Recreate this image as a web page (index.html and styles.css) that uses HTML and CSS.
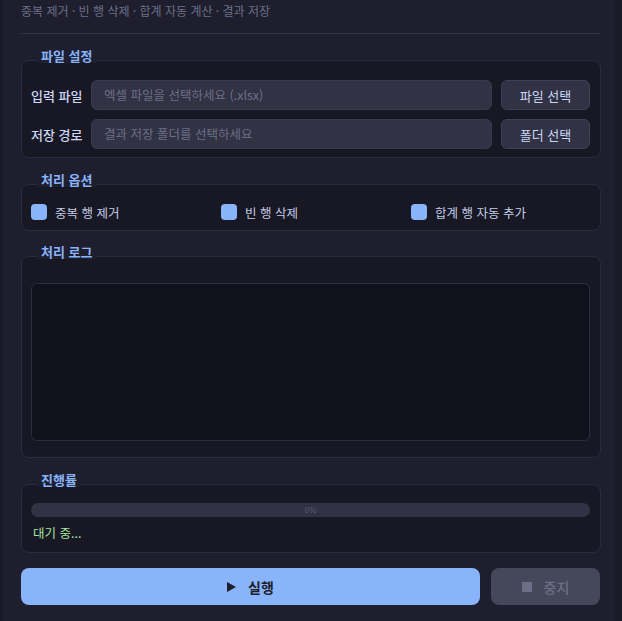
FILE: index.html
```html
<!DOCTYPE html>
<html lang="ko">
<head>
<meta charset="utf-8">
<title>엑셀 처리</title>
<link rel="stylesheet" href="styles.css">
</head>
<body>
<div class="app">
  <div class="subtitle">중복 제거 · 빈 행 삭제 · 합계 자동 계산 · 결과 저장</div>
  <div class="divider"></div>

  <section class="group group-files">
    <div class="group-title">파일 설정</div>
    <div class="file-row">
      <span class="row-label">입력 파일</span>
      <div class="input">엑셀 파일을 선택하세요 (.xlsx)</div>
      <button class="btn">파일 선택</button>
    </div>
    <div class="file-row">
      <span class="row-label">저장 경로</span>
      <div class="input">결과 저장 폴더를 선택하세요</div>
      <button class="btn">폴더 선택</button>
    </div>
  </section>

  <section class="group group-options">
    <div class="group-title">처리 옵션</div>
    <div class="options">
      <label class="check"><span class="box"></span><span>중복 행 제거</span></label>
      <label class="check"><span class="box"></span><span>빈 행 삭제</span></label>
      <label class="check"><span class="box"></span><span>합계 행 자동 추가</span></label>
    </div>
  </section>

  <section class="group group-log">
    <div class="group-title">처리 로그</div>
    <div class="log"></div>
  </section>

  <section class="group group-progress">
    <div class="group-title">진행률</div>
    <div class="progress"><span>0%</span></div>
    <div class="status">대기 중...</div>
  </section>

  <div class="actions">
    <button class="run"><span class="tri"></span>실행</button>
    <button class="stop"><span class="sq"></span>중지</button>
  </div>
</div>
</body>
</html>
```

FILE: styles.css
```css
* { box-sizing: border-box; }
html, body { margin: 0; padding: 0; }
body {
  background: #1e1e2e;
  width: 622px;
  height: 621px;
  overflow: hidden;
  font-family: "Noto Sans CJK KR", "Noto Sans", sans-serif;
  color: #cdd6f4;
  box-shadow: inset -7px 0 0 #1a1a28, inset 2px 0 0 #1a1a26;
}
.app {
  padding: 3px 21px 0 21px;
}
.subtitle {
  height: 16px;
  line-height: 16px;
  font-size: 12px;
  color: #6c7086;
}
.divider {
  margin-top: 14px;
  height: 1px;
  background: #313244;
}
.group {
  position: relative;
  background: #181825;
  border: 1px solid #2a2b3c;
  border-radius: 8px;
  margin-top: 26px;
}
.group-title {
  position: absolute;
  top: -12px;
  left: 15px;
  padding: 0 4px;
  background: #1e1e2e;
  font-size: 13px;
  line-height: 14px;
  font-weight: 700;
  color: #89b4fa;
}
.group-files {
  padding: 19px 10px 8px 9px;
}
.file-row {
  display: flex;
  align-items: center;
  height: 30px;
}
.file-row + .file-row { margin-top: 9px; }
.row-label {
  width: 60px;
  font-size: 13px;
  font-weight: 500;
  color: #cdd6f4;
}
.input {
  flex: 1;
  height: 30px;
  line-height: 28px;
  padding: 0 12px;
  background: #313244;
  border: 1px solid #383a4e;
  border-radius: 6px;
  font-size: 12.5px;
  color: #6c7086;
}
.btn {
  margin-left: 9px;
  width: 89px;
  height: 30px;
  background: #313244;
  border: 1px solid #3d3f54;
  border-radius: 6px;
  font-family: inherit;
  font-size: 13px;
  color: #cdd6f4;
  padding: 0;
}
.group-options {
  padding: 19px 10px 10px 9px;
}
.options {
  display: grid;
  grid-template-columns: repeat(3, 180px);
  column-gap: 10px;
}
.check {
  display: flex;
  align-items: center;
  height: 16px;
  font-size: 12.5px;
  color: #c4cbe6;
}
.box {
  width: 16px;
  height: 16px;
  border-radius: 4px;
  background: #89b4fa;
  margin-right: 8px;
}
.group-log {
  margin-top: 25px;
  padding: 26px 10px 16px 9px;
}
.log {
  height: 158px;
  background: #11111b;
  border: 1px solid #2c2d3e;
  border-radius: 6px;
}
.group-progress {
  padding: 18px 10px 12px 9px;
}
.progress {
  height: 14px;
  border-radius: 7px;
  background: #313244;
  display: flex;
  align-items: center;
  justify-content: center;
  font-size: 8px;
  line-height: 14px;
  color: #585b70;
}
.status {
  margin-top: 9px;
  height: 14px;
  line-height: 14px;
  font-size: 12.5px;
  padding-left: 2px;
  color: #a6e3a1;
}
.actions {
  margin-top: 15px;
  display: flex;
  gap: 11px;
  padding-right: 1px;
}
.run, .stop {
  height: 37px;
  border: none;
  border-radius: 8px;
  font-family: inherit;
  font-size: 14px;
  font-weight: 700;
  display: flex;
  align-items: center;
  justify-content: center;
  padding: 0;
}
.run {
  flex: 1;
  background: #89b4fa;
  color: #1e1e2e;
}
.stop {
  width: 109px;
  background: #45475a;
  color: #6c7086;
  font-weight: 500;
}
.tri {
  width: 0;
  height: 0;
  border-top: 5px solid transparent;
  border-bottom: 5px solid transparent;
  border-left: 9px solid #1e1e2e;
  margin-right: 12px;
}
.sq {
  width: 10px;
  height: 10px;
  background: #6c7086;
  margin-right: 12px;
}
```
